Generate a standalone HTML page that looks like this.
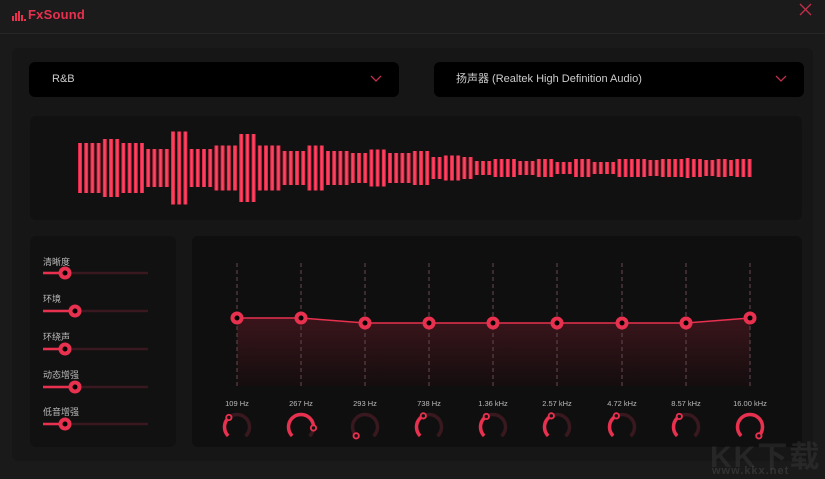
<!DOCTYPE html>
<html><head><meta charset="utf-8">
<style>
body{margin:0;width:825px;height:479px;background:#1a1a1a;position:relative;overflow:hidden;font-family:"Liberation Sans","Noto Sans CJK SC",sans-serif;}
.abs{position:absolute}
.dd{position:absolute;top:62px;height:35px;background:#000;border-radius:6px;color:#ccc;font-size:11px;line-height:35px}
.lbl{position:absolute;left:43px;color:#bbb;font-size:9px}
</style></head><body>
<div class="abs" style="left:0;top:0;width:825px;height:33px;background:#1b1b1b;border-bottom:1px solid #262626"></div>
<svg class="abs" style="left:12px;top:11px" width="14" height="10"><rect x="0" y="5" width="2" height="5" fill="#e8304f"/><rect x="3" y="2" width="2" height="8" fill="#e8304f"/><rect x="6" y="0" width="2" height="10" fill="#e8304f"/><rect x="9" y="4" width="2" height="6" fill="#e8304f"/><rect x="12" y="8" width="2" height="2" fill="#e8304f"/></svg>
<div class="abs" style="left:28px;top:7px;color:#e8304f;font-size:13px;font-weight:bold;letter-spacing:.2px">FxSound</div>
<svg class="abs" style="left:799px;top:3px" width="13" height="13"><path d="M1 1L12 12M12 1L1 12" stroke="#c0304a" stroke-width="1.3"/></svg>

<div class="abs" style="left:12px;top:48px;width:801px;height:413px;background:#161616;border-radius:6px"></div>
<div class="dd" style="left:29px;width:370px"><span style="margin-left:23px">R&amp;B</span></div>
<svg class="abs" style="left:370px;top:75px" width="12" height="8"><path d="M1 1L6 6L11 1" stroke="#c0304a" fill="none" stroke-width="1.3"/></svg>
<div class="dd" style="left:434px;width:370px"><span style="margin-left:22px">扬声器 (Realtek High Definition Audio)</span></div>
<svg class="abs" style="left:775px;top:75px" width="12" height="8"><path d="M1 1L6 6L11 1" stroke="#c0304a" fill="none" stroke-width="1.3"/></svg>

<div class="abs" style="left:30px;top:116px;width:772px;height:104px;background:#111;border-radius:6px"></div>
<svg class="abs" style="left:0;top:0" width="825" height="240">
<defs><linearGradient id="bg" x1="0" y1="0" x2="1" y2="0"><stop offset="0" stop-color="#d81f3e"/><stop offset=".5" stop-color="#ff4d68"/><stop offset="1" stop-color="#d81f3e"/></linearGradient></defs>
<g fill="url(#bg)" id="bars"></g>
</svg>
<script>
var h=[50,50,50,50,58,58,58,50,50,50,50,38,38,38,38,73,73,73,38,38,38,38,45,45,45,45,68,68,68,45,45,45,45,34,34,34,34,45,45,45,34,34,34,34,30,30,30,37,37,37,30,30,30,30,34,34,34,22,22,25,25,25,22,22,14,14,14,18,18,18,18,14,14,14,18,18,18,12,12,12,18,18,18,12,12,12,12,18,18,18,18,18,16,16,18,18,18,18,20,18,18,16,16,18,18,16,18,18,18];
var s='';for(var i=0;i<h.length;i++){var x=78+i*6.2;s+='<rect x="'+x.toFixed(1)+'" y="'+(168-h[i]/2)+'" width="4" height="'+h[i]+'"/>';}
document.getElementById('bars').innerHTML=s;
</script>

<div class="abs" style="left:30px;top:236px;width:146px;height:211px;background:#111;border-radius:6px"></div>
<div class="abs" style="left:192px;top:236px;width:610px;height:211px;background:#0f0f0f;border-radius:6px"></div>

<div class="lbl" style="top:255px">清晰度</div>
<div class="lbl" style="top:292px">环境</div>
<div class="lbl" style="top:330px">环绕声</div>
<div class="lbl" style="top:368px">动态增强</div>
<div class="lbl" style="top:405px">低音增强</div>
<svg class="abs" style="left:0;top:0" width="190" height="479">
<g stroke-width="2.5">
<line x1="43" y1="273" x2="148" y2="273" stroke="#3a1820"/><line x1="43" y1="273" x2="65" y2="273" stroke="#e8304f"/>
<line x1="43" y1="311" x2="148" y2="311" stroke="#3a1820"/><line x1="43" y1="311" x2="75" y2="311" stroke="#e8304f"/>
<line x1="43" y1="349" x2="148" y2="349" stroke="#3a1820"/><line x1="43" y1="349" x2="65" y2="349" stroke="#e8304f"/>
<line x1="43" y1="387" x2="148" y2="387" stroke="#3a1820"/><line x1="43" y1="387" x2="75" y2="387" stroke="#e8304f"/>
<line x1="43" y1="424" x2="148" y2="424" stroke="#3a1820"/><line x1="43" y1="424" x2="65" y2="424" stroke="#e8304f"/>
</g>
<g fill="#e8304f"><circle cx="65" cy="273" r="6.5"/><circle cx="75" cy="311" r="6.5"/><circle cx="65" cy="349" r="6.5"/><circle cx="75" cy="387" r="6.5"/><circle cx="65" cy="424" r="6.5"/></g>
<g fill="#000"><circle cx="65" cy="273" r="2.5"/><circle cx="75" cy="311" r="2.5"/><circle cx="65" cy="349" r="2.5"/><circle cx="75" cy="387" r="2.5"/><circle cx="65" cy="424" r="2.5"/></g>
</svg>

<svg class="abs" style="left:0;top:0" width="825" height="479">
<defs><linearGradient id="fg" x1="0" y1="0" x2="0" y2="1"><stop offset="0" stop-color="#3a151b"/><stop offset="1" stop-color="#140d0e"/></linearGradient></defs>
<path d="M237 318L301 318L365 323L429 323L493 323L557 323L622 323L686 323L750 318L750 386L237 386Z" fill="url(#fg)"/>
<g stroke="#5a4048" stroke-width="1.2" stroke-dasharray="4 3">
<line x1="237" y1="263" x2="237" y2="386"/><line x1="301" y1="263" x2="301" y2="386"/><line x1="365" y1="263" x2="365" y2="386"/><line x1="429" y1="263" x2="429" y2="386"/><line x1="493" y1="263" x2="493" y2="386"/><line x1="557" y1="263" x2="557" y2="386"/><line x1="622" y1="263" x2="622" y2="386"/><line x1="686" y1="263" x2="686" y2="386"/><line x1="750" y1="263" x2="750" y2="386"/>
</g>
<path d="M237 318L301 318L365 323L429 323L493 323L557 323L622 323L686 323L750 318" stroke="#e8304f" stroke-width="1.5" fill="none"/>
<g fill="#e8304f"><circle cx="237" cy="318" r="6.5"/><circle cx="301" cy="318" r="6.5"/><circle cx="365" cy="323" r="6.5"/><circle cx="429" cy="323" r="6.5"/><circle cx="493" cy="323" r="6.5"/><circle cx="557" cy="323" r="6.5"/><circle cx="622" cy="323" r="6.5"/><circle cx="686" cy="323" r="6.5"/><circle cx="750" cy="318" r="6.5"/></g>
<g fill="#000"><circle cx="237" cy="318" r="2.5"/><circle cx="301" cy="318" r="2.5"/><circle cx="365" cy="323" r="2.5"/><circle cx="429" cy="323" r="2.5"/><circle cx="493" cy="323" r="2.5"/><circle cx="557" cy="323" r="2.5"/><circle cx="622" cy="323" r="2.5"/><circle cx="686" cy="323" r="2.5"/><circle cx="750" cy="318" r="2.5"/></g>
<g font-family="Liberation Sans, sans-serif" font-size="7.5" fill="#bbb" text-anchor="middle">
<text x="237" y="406">109 Hz</text><text x="301" y="406">267 Hz</text><text x="365" y="406">293 Hz</text><text x="429" y="406">738 Hz</text><text x="493" y="406">1.36 kHz</text><text x="557" y="406">2.57 kHz</text><text x="622" y="406">4.72 kHz</text><text x="686" y="406">8.57 kHz</text><text x="750" y="406">16.00 kHz</text>
</g>
<g id="knobs"></g>
</svg>
<script>
var K=[[237,.35],[301,.85],[365,0],[429,.4],[493,.38],[557,.4],[622,.4],[686,.38],[750,1]];
var R=12.5,C=2*Math.PI*R,s='';
K.forEach(function(k){var x=k[0],y=427,f=k[1];
s+='<circle cx="'+x+'" cy="'+y+'" r="'+R+'" fill="none" stroke="#3a1820" stroke-width="3.5" stroke-dasharray="'+(C*.75)+' '+C+'" transform="rotate(135 '+x+' '+y+')"/>';
if(f>0)s+='<circle cx="'+x+'" cy="'+y+'" r="'+R+'" fill="none" stroke="#e8304f" stroke-width="3.5" stroke-dasharray="'+(C*.75*f)+' '+C+'" transform="rotate(135 '+x+' '+y+')"/>';
var a=(135+270*f)*Math.PI/180,dx=x+R*Math.cos(a),dy=y+R*Math.sin(a);
s+='<circle cx="'+dx+'" cy="'+dy+'" r="3.6" fill="#e8304f"/><circle cx="'+dx+'" cy="'+dy+'" r="1.7" fill="#111"/>';});
document.getElementById('knobs').innerHTML=s;
</script>
<div class="abs" style="left:710px;top:432px;color:rgba(70,70,70,0.35);font-size:30px;font-weight:bold;letter-spacing:2px">KK下载</div>
<div class="abs" style="left:712px;top:465px;color:rgba(80,80,80,0.45);font-size:11px;font-weight:bold;letter-spacing:1px">www.kkx.net</div>
</body></html>
